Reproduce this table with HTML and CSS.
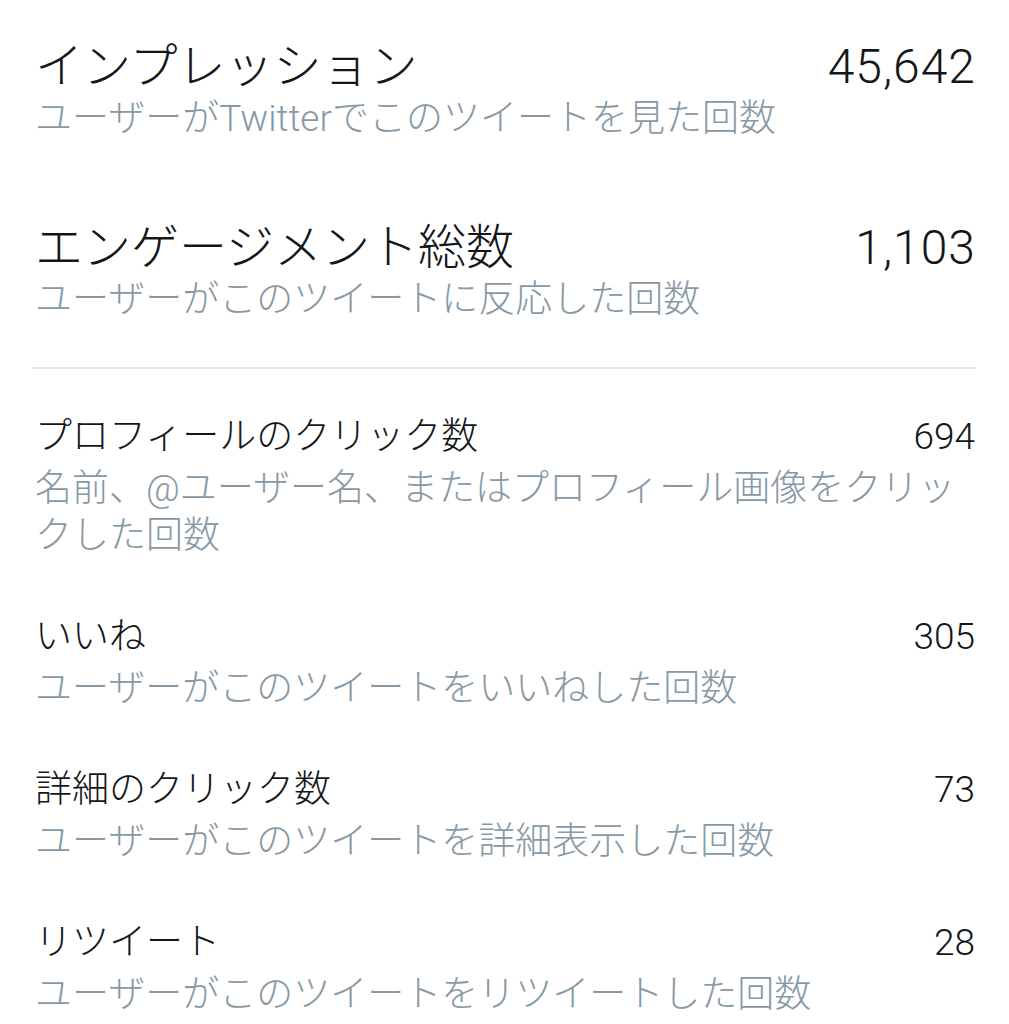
FILE: index.html
```html
<!DOCTYPE html>
<html lang="ja">
<head>
<meta charset="utf-8">
<title>ツイートアクティビティ</title>
<link rel="stylesheet" href="styles.css">
</head>
<body>
<main class="stats">
  <section class="metric metric-major first">
    <div class="metric-title">インプレッション</div>
    <div class="metric-value">45,642</div>
    <div class="metric-desc">ユーザーがTwitterでこのツイートを見た回数</div>
  </section>
  <section class="metric metric-major second">
    <div class="metric-title">エンゲージメント総数</div>
    <div class="metric-value">1,103</div>
    <div class="metric-desc">ユーザーがこのツイートに反応した回数</div>
  </section>
  <hr class="divider">
  <section class="metric metric-minor">
    <div class="metric-title">プロフィールのクリック数</div>
    <div class="metric-value">694</div>
    <div class="metric-desc">名前、@ユーザー名、またはプロフィール画像をクリックした回数</div>
  </section>
  <section class="metric metric-minor">
    <div class="metric-title">いいね</div>
    <div class="metric-value">305</div>
    <div class="metric-desc">ユーザーがこのツイートをいいねした回数</div>
  </section>
  <section class="metric metric-minor">
    <div class="metric-title">詳細のクリック数</div>
    <div class="metric-value">73</div>
    <div class="metric-desc">ユーザーがこのツイートを詳細表示した回数</div>
  </section>
  <section class="metric metric-minor">
    <div class="metric-title">リツイート</div>
    <div class="metric-value">28</div>
    <div class="metric-desc">ユーザーがこのツイートをリツイートした回数</div>
  </section>
</main>
</body>
</html>
```

FILE: styles.css
```css
html, body {
  margin: 0;
  padding: 0;
  background: #ffffff;
}

body {
  font-family: Roboto, "Noto Sans CJK JP", sans-serif;
  color: #14171a;
}

.stats {
  padding: 41px 34px 0 35px;
  display: flex;
  flex-direction: column;
}

.metric {
  display: grid;
  grid-template-columns: 1fr auto;
  align-items: center;
}

.metric-title {
  font-weight: 300;
}

.metric-value {
  text-align: right;
  font-weight: 300;
}

.metric-desc {
  grid-column: 1 / -1;
  color: #8899a6;
  font-size: 37px;
  font-weight: 300;
  line-height: 47px;
  line-break: strict;
}

.metric-major .metric-title,
.metric-major .metric-value {
  font-size: 48px;
  line-height: 52px;
}

.metric-major .metric-value {
  letter-spacing: 1px;
  margin-right: -1px;
}

.metric-major .metric-desc {
  margin-top: 2px;
}

.metric-major.second {
  margin-top: 80px;
}

.divider {
  border: 0;
  height: 2px;
  background: #e3e7ea;
  margin: 44px -1px 44px -3px;
}

.metric-minor .metric-title,
.metric-minor .metric-value {
  font-size: 37px;
  line-height: 47px;
}

.metric-minor .metric-desc {
  margin-top: 5px;
}

.metric-minor + .metric-minor {
  margin-top: 54px;
}
```
